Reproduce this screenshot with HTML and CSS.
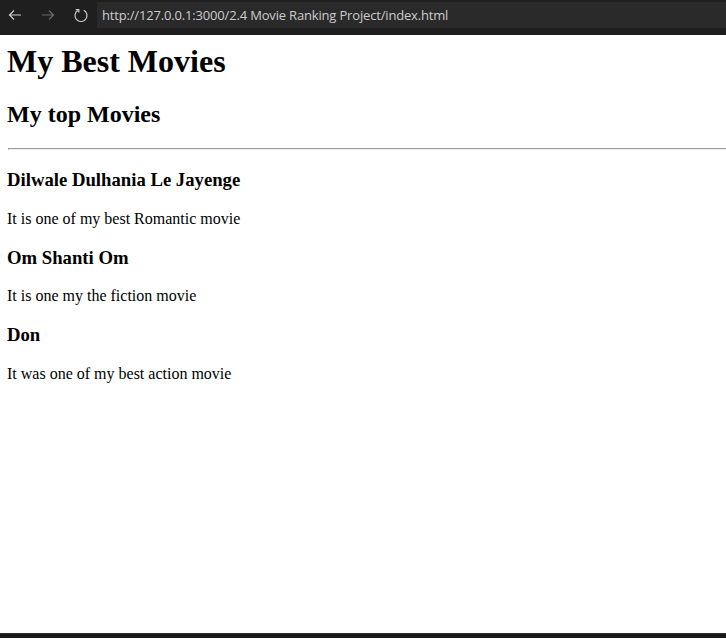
FILE: index.html
```html
<!DOCTYPE html>
<html>
<head>
<meta charset="utf-8">
<title>My Best Movies</title>
<link rel="stylesheet" href="styles.css">
</head>
<body>
<div class="toolbar">
  <div class="nav">
    <svg class="icon" width="16" height="16" viewBox="0 0 16 16"><path d="M14 8H2.5M7 3.5L2.5 8 7 12.5" fill="none" stroke="#cccccc" stroke-width="1.2"/></svg>
    <svg class="icon dim" width="16" height="16" viewBox="0 0 16 16"><path d="M2 8h11.5M9 3.5L13.5 8 9 12.5" fill="none" stroke="#6b6b6b" stroke-width="1.2"/></svg>
    <svg class="icon" width="16" height="16" viewBox="0 0 16 16"><path d="M5.2 3.2A6 6 0 1 0 10.8 3.2" fill="none" stroke="#cccccc" stroke-width="1.2"/><path d="M2.8 2.6h3v3" fill="none" stroke="#cccccc" stroke-width="1.2"/></svg>
  </div>
  <div class="address">http://127.0.0.1:3000/2.4 Movie Ranking Project/index.html</div>
</div>
<main class="page">
  <h1>My Best Movies</h1>
  <h2>My top Movies</h2>
  <hr>
  <h3>Dilwale Dulhania Le Jayenge</h3>
  <p>It is one of my best Romantic movie</p>
  <h3>Om Shanti Om</h3>
  <p>It is one my the fiction movie</p>
  <h3>Don</h3>
  <p>It was one of my best action movie</p>
</main>
<div class="statusbar"></div>
</body>
</html>
```
FILE: styles.css
```css
html, body {
  margin: 0;
  padding: 0;
  height: 100%;
  overflow: hidden;
}
body {
  display: flex;
  flex-direction: column;
  background: #ffffff;
  font-family: "Liberation Serif", "Times New Roman", serif;
  color: #000;
}
.toolbar {
  height: 35px;
  flex: none;
  background: #1f1f1f;
  display: flex;
  align-items: flex-start;
  box-sizing: border-box;
}
.nav {
  display: flex;
  align-items: center;
  gap: 17px;
  padding: 7px 0 0 7px;
  width: 90px;
  box-sizing: border-box;
}
.icon { display: block; }
.address {
  margin-top: 2px;
  margin-left: 7px;
  flex: 1;
  height: 26px;
  background: #2a2a2a;
  color: #cccccc;
  font-family: "Open Sans", "Noto Sans", sans-serif;
  font-size: 13px;
  letter-spacing: -0.17px;
  line-height: 26px;
  padding-left: 5px;
  white-space: nowrap;
}
.page {
  flex: 1;
  padding: 0 0 0 7px;
  margin-right: -20px;
}
.page h1 {
  font-size: 2em;
  margin: 8px 0 21.44px;
}
.page h2 {
  font-size: 1.5em;
  margin: 19.92px 0;
}
.page hr {
  margin: 8px 0 8px 1px;
}
.page h3 {
  font-size: 1.17em;
  margin: 18.72px 0;
}
.page p {
  font-size: 16px;
  margin: 16px 0;
}
.statusbar {
  height: 4px;
  flex: none;
  background: #1a1a1a;
  border-top: 1px solid #2b2b2b;
}
```
